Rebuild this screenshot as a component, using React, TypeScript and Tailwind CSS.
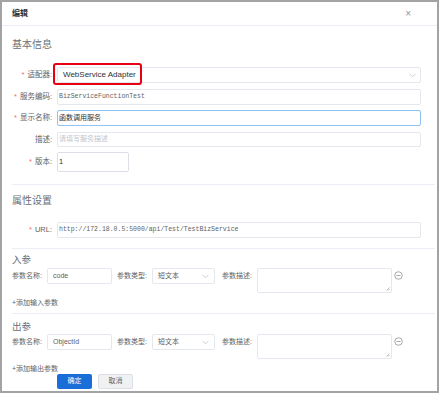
import React from "react";

const F = { fontFamily: '"Helvetica Neue", "Liberation Sans", "Noto Sans CJK SC", sans-serif' };
const M = { fontFamily: '"Liberation Mono", "Noto Sans CJK SC", monospace' };

function Star() {
  return <span className="text-[#f56c6c] mr-[3px]">*</span>;
}

function Label({ req, children }: { req?: boolean; children: React.ReactNode }) {
  return (
    <div className="w-[45px] shrink-0 text-right text-[7.5px] text-[#606266] pr-[5px] leading-none whitespace-nowrap">
      {req && <Star />}
      {children}
    </div>
  );
}

function Chevron() {
  return (
    <svg width="7" height="5" viewBox="0 0 7 5" className="shrink-0">
      <path d="M0.5 0.8 L3.5 3.8 L6.5 0.8" fill="none" stroke="#c0c4cc" strokeWidth="0.8" />
    </svg>
  );
}

function MinusCircle() {
  return (
    <svg width="9" height="9" viewBox="0 0 10 10">
      <circle cx="5" cy="5" r="4.2" fill="none" stroke="#909399" strokeWidth="0.9" />
      <path d="M2.8 5 H7.2" stroke="#909399" strokeWidth="0.9" />
    </svg>
  );
}

function ParamRow({ name }: { name: string }) {
  return (
    <div className="flex items-start">
      <div className="flex items-center h-[16px]">
        <span className="text-[7px] text-[#606266] w-[35px] whitespace-nowrap">参数名称:</span>
        <div className="w-[65px] h-[16px] border border-[#e4e7ed] rounded-[2px] flex items-center px-[5px] text-[7px] text-[#606266]">
          {name}
        </div>
        <span className="text-[7px] text-[#606266] ml-[5px] w-[35px] whitespace-nowrap">参数类型:</span>
        <div className="w-[63px] h-[16px] border border-[#e4e7ed] rounded-[2px] flex items-center justify-between px-[5px] text-[7px] text-[#606266]">
          <span>短文本</span>
          <Chevron />
        </div>
        <span className="text-[7px] text-[#606266] ml-[7px] w-[35px] whitespace-nowrap">参数描述:</span>
      </div>
      <div className="relative w-[135px] h-[25px] border border-[#e4e7ed] rounded-[2px]">
        <svg width="4" height="4" viewBox="0 0 4 4" className="absolute right-[1px] bottom-[1px]">
          <path d="M0.5 3.5 L3.5 0.5 M2 3.5 L3.5 2" stroke="#909399" strokeWidth="0.6" />
        </svg>
      </div>
      <div className="ml-[2px] mt-[3px]">
        <MinusCircle />
      </div>
    </div>
  );
}

export default function App() {
  return (
    <div className="w-[439px] h-[393px] bg-white border-2 border-[#a3a3a3] flex flex-col overflow-hidden" style={F}>
      <div className="h-[24px] shrink-0 flex items-center justify-between pl-[10px] pr-[26px] border-b border-[#ebeef5]">
        <span className="text-[8px] font-bold text-[#303133]">编辑</span>
        <span className="text-[10px] text-[#909399] leading-none">×</span>
      </div>
      <div className="relative flex flex-col pl-[10px] pr-[9px]">
        <div className="text-[10px] text-[#6b6f76] mt-[12px] h-[14px] leading-[14px]">基本信息</div>

        <div className="flex items-center mt-[15px] h-[16px]">
          <Label req>适配器:</Label>
          <div className="w-[364px] h-[16px] border border-[#e4e7ed] rounded-[2px] flex items-center justify-between pl-[5px] pr-[4px] text-[8px] text-[#303133]">
            <span>WebService Adapter</span>
            <Chevron />
          </div>
        </div>
        <div className="absolute left-[51px] top-[37px] w-[89px] h-[22px] border-2 border-[#e60012] rounded-[3px]" />

        <div className="flex items-center mt-[6px] h-[16px]">
          <Label req>服务编码:</Label>
          <div className="w-[364px] h-[16px] border border-[#e4e7ed] rounded-[2px] flex items-center px-[1px] text-[6.5px] text-[#606266]" style={M}>
            BizServiceFunctionTest
          </div>
        </div>

        <div className="flex items-center mt-[5px] h-[16px]">
          <Label req>显示名称:</Label>
          <div className="w-[364px] h-[16px] border border-[#90c2f5] rounded-[2px] flex items-center px-[1px] text-[7px] text-[#303133]">
            函数调用服务
          </div>
        </div>

        <div className="flex items-center mt-[6px] h-[15px]">
          <Label>描述:</Label>
          <div className="w-[364px] h-[15px] border border-[#e4e7ed] rounded-[2px] flex items-center px-[1px] text-[7px] text-[#c0c4cc]">
            请填写服务描述
          </div>
        </div>

        <div className="flex items-center mt-[5px] h-[20px]">
          <Label req>版本:</Label>
          <div className="w-[72px] h-[20px] border border-[#dcdfe6] rounded-[2px] flex items-center px-[1px] text-[7.5px] text-[#303133]">
            1
          </div>
        </div>

        <div className="h-px bg-[#ebeef5] mt-[12px] mr-[-7px]" />

        <div className="text-[10px] text-[#6b6f76] mt-[9px] h-[14px] leading-[14px]">属性设置</div>

        <div className="flex items-center mt-[14px] h-[16px]">
          <Label req>URL:</Label>
          <div className="w-[364px] h-[16px] border border-[#e4e7ed] rounded-[2px] flex items-center px-[1px] text-[6.5px] text-[#606266]" style={M}>
            http://172.18.0.5:5000/api/Test/TestBizService
          </div>
        </div>

        <div className="h-px bg-[#ebeef5] mt-[10px] mr-[-7px]" />

        <div className="text-[9.5px] text-[#6b6f76] mt-[5px] h-[12px] leading-[12px]">入参</div>
        <div className="mt-[2px]">
          <ParamRow name="code" />
        </div>
        <div className="text-[7px] text-[#606266] mt-[5px] h-[10px] leading-[10px]">+添加输入参数</div>

        <div className="h-px bg-[#ebeef5] mt-[5px] mr-[-7px]" />

        <div className="text-[9.5px] text-[#6b6f76] mt-[7px] h-[12px] leading-[12px]">出参</div>
        <div className="mt-[1px]">
          <ParamRow name="ObjectId" />
        </div>
        <div className="text-[7px] text-[#606266] mt-[5px] h-[10px] leading-[10px]">+添加输出参数</div>

        <div className="flex mt-[0px] ml-[45px] gap-[6px]">
          <div className="w-[35px] h-[15px] rounded-[2px] bg-[#1a6ed8] text-white text-[7px] flex items-center justify-center">确定</div>
          <div className="w-[35px] h-[15px] rounded-[2px] bg-[#f0f1f3] border border-[#dcdfe6] text-[#606266] text-[7px] flex items-center justify-center">取消</div>
        </div>
      </div>
    </div>
  );
}
